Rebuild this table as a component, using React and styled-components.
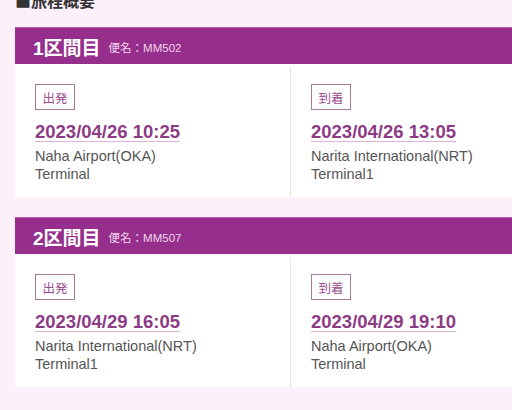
import React from 'react';
import styled, { createGlobalStyle } from 'styled-components';

const legs = [
  {
    no: 1,
    flight: 'MM502',
    dep: { date: '2023/04/26 10:25', airport: 'Naha Airport(OKA)', terminal: 'Terminal' },
    arr: { date: '2023/04/26 13:05', airport: 'Narita International(NRT)', terminal: 'Terminal1' },
  },
  {
    no: 2,
    flight: 'MM507',
    dep: { date: '2023/04/29 16:05', airport: 'Narita International(NRT)', terminal: 'Terminal1' },
    arr: { date: '2023/04/29 19:10', airport: 'Naha Airport(OKA)', terminal: 'Terminal' },
  },
];

function Point({ label, info, right }) {
  return (
    <Column right={right}>
      <Badge>{label}</Badge>
      <DateTime>{info.date}</DateTime>
      <Place>{info.airport}</Place>
      <Place>{info.terminal}</Place>
    </Column>
  );
}

export default function App() {
  return (
    <Page>
      <GlobalStyle />
      <Heading>■旅程概要</Heading>
      {legs.map((leg) => (
        <Card key={leg.no}>
          <CardHeader>
            <LegTitle>{leg.no}区間目</LegTitle>
            <Flight>便名：{leg.flight}</Flight>
          </CardHeader>
          <CardBody>
            <Point label="出発" info={leg.dep} />
            <Point label="到着" info={leg.arr} right />
          </CardBody>
        </Card>
      ))}
    </Page>
  );
}

const GlobalStyle = createGlobalStyle`
  html, body {
    margin: 0;
    padding: 0;
    background: #fcf0fb;
    overflow: hidden;
  }
  body {
    font-family: "Liberation Sans", "Noto Sans CJK JP", sans-serif;
  }
`;

const Page = styled.div`
  width: 512px;
  height: 410px;
  padding-left: 15px;
  box-sizing: border-box;
  overflow: hidden;
`;

const Heading = styled.h2`
  margin: -8px 0 19px;
  font-size: 16px;
  line-height: 16px;
  font-weight: bold;
  color: #333;
  font-family: "Noto Sans CJK JP", sans-serif;
`;

const Card = styled.section`
  width: 497px;
  margin-bottom: 20px;
  background: #fff;
`;

const CardHeader = styled.div`
  height: 37px;
  background: #952f8b;
  display: flex;
  align-items: center;
  padding-left: 18px;
  gap: 8px;
  border-top: 1px solid #b45aa9;
  box-sizing: border-box;
`;

const LegTitle = styled.span`
  color: #fff;
  font-size: 19px;
  font-weight: bold;
  font-family: "Liberation Sans", "Noto Sans CJK JP", sans-serif;
`;

const Flight = styled.span`
  color: #f1d3ec;
  font-size: 11.5px;
  font-family: "Liberation Sans", "Noto Sans CJK JP", sans-serif;
  margin-top: 2px;
`;

const CardBody = styled.div`
  display: flex;
  height: 133px;
  padding-top: 3px;
  box-sizing: border-box;
`;

const Column = styled.div`
  width: ${(p) => (p.right ? 'auto' : '275px')};
  flex: ${(p) => (p.right ? '1' : 'none')};
  box-sizing: border-box;
  padding: 17px 0 0 20px;
  border-left: ${(p) => (p.right ? '1px solid #ebe3ea' : 'none')};
`;

const Badge = styled.div`
  display: inline-flex;
  align-items: center;
  justify-content: center;
  width: 40px;
  height: 26px;
  box-sizing: border-box;
  border: 1px solid #a57a9d;
  color: #9b4d8f;
  font-size: 12.5px;
  font-family: "Noto Sans CJK JP", sans-serif;
`;

const DateTime = styled.div`
  margin-top: 10px;
  margin-bottom: 3px;
  font-size: 18.5px;
  line-height: 24px;
  font-weight: bold;
  color: #8d3b85;
  text-decoration: underline;
  text-decoration-color: #dcb4d6;
  text-decoration-thickness: 1px;
  text-underline-offset: 3px;
`;

const Place = styled.div`
  font-size: 14.5px;
  line-height: 18px;
  color: #555;
`;
